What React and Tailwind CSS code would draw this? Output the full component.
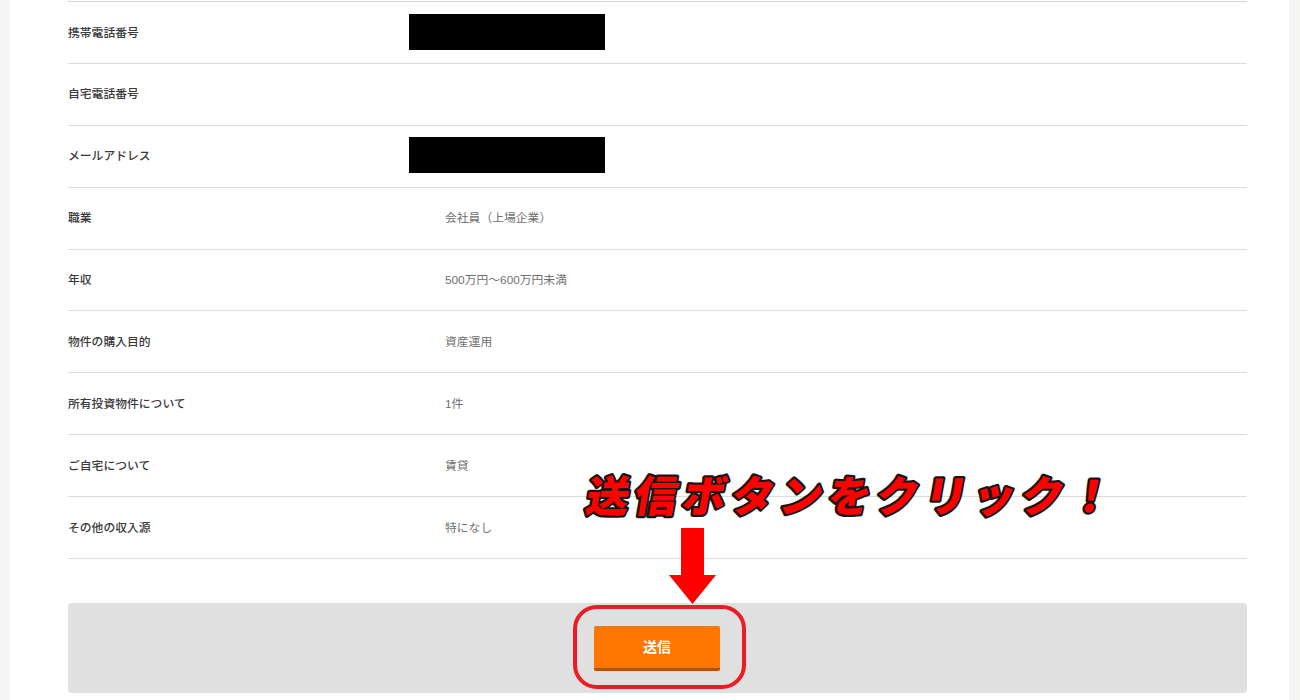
const rows = [
    { label: '携帯電話番号', redacted: true },
    { label: '自宅電話番号' },
    { label: 'メールアドレス', redacted: true },
    { label: '職業', value: '会社員（上場企業）' },
    { label: '年収', value: '500万円～600万円未満' },
    { label: '物件の購入目的', value: '資産運用' },
    { label: '所有投資物件について', value: '1件' },
    { label: 'ご自宅について', value: '賃貸' },
    { label: 'その他の収入源', value: '特になし' },
];

const fontStack = "font-['Liberation_Sans','Noto_Sans_CJK_JP',sans-serif]";

const App = () => {
    return (
        <div className={`relative h-[700px] overflow-hidden bg-[#f5f5f4] px-[10px] ${fontStack}`}>
            <div className="h-full w-[1279px] bg-white pl-[58px] pr-[42px] pt-px">
                {/* Confirmation table */}
                <div className="border-t border-[#d4d4d4]">
                    {rows.map((row) => (
                        <div
                            key={row.label}
                            className="grid h-[61.9px] grid-cols-[341px_1fr] items-center border-b border-[#dcdcdc] text-[11.8px]"
                        >
                            <span className="pt-[2px] font-medium text-[#3a3a3a]">{row.label}</span>
                            {row.redacted ? (
                                <div className="mb-[1.6px] h-9 w-[196px] bg-black" />
                            ) : (
                                <span className="pl-9 pt-[2px] text-[#707070]">{row.value}</span>
                            )}
                        </div>
                    ))}
                </div>

                {/* Submit area */}
                <div className="relative mt-[44px] flex h-[90px] items-center justify-center rounded-sm bg-[#e0e0e0] pr-[1px]">
                    <button className="h-[45px] w-[126px] rounded-[2px] border-t border-b-[3px] border-t-[#e8761a] border-b-[#b4520f] bg-[#ff7700] text-sm font-bold text-white">
                        送信
                    </button>
                    <div className="absolute left-[505px] top-[2px] h-[84px] w-[173px] rounded-[24px] border-4 border-[#ed1c24]" />
                </div>
            </div>

            {/* Annotation */}
            <svg className="absolute left-[570px] top-[450px]" width="620" height="100" viewBox="0 0 620 100">
                <text
                    x="0"
                    y="0"
                    transform="translate(14 62) skewX(-10)"
                    fontFamily="'Noto Sans CJK JP', sans-serif"
                    fontSize="43"
                    fontWeight="900"
                    letterSpacing="5.3"
                    fill="#ff0000"
                    stroke="#161616"
                    strokeWidth="4.5"
                    strokeLinejoin="round"
                    paintOrder="stroke"
                >
                    送信ボタンをクリック！
                </text>
            </svg>
            <svg className="absolute left-[669px] top-[528px]" width="47" height="76" viewBox="0 0 47 76">
                <path d="M12 0H35V47H47L23.5 76L0 47H12Z" fill="#ff0000" />
            </svg>
        </div>
    );
};

export default App;
